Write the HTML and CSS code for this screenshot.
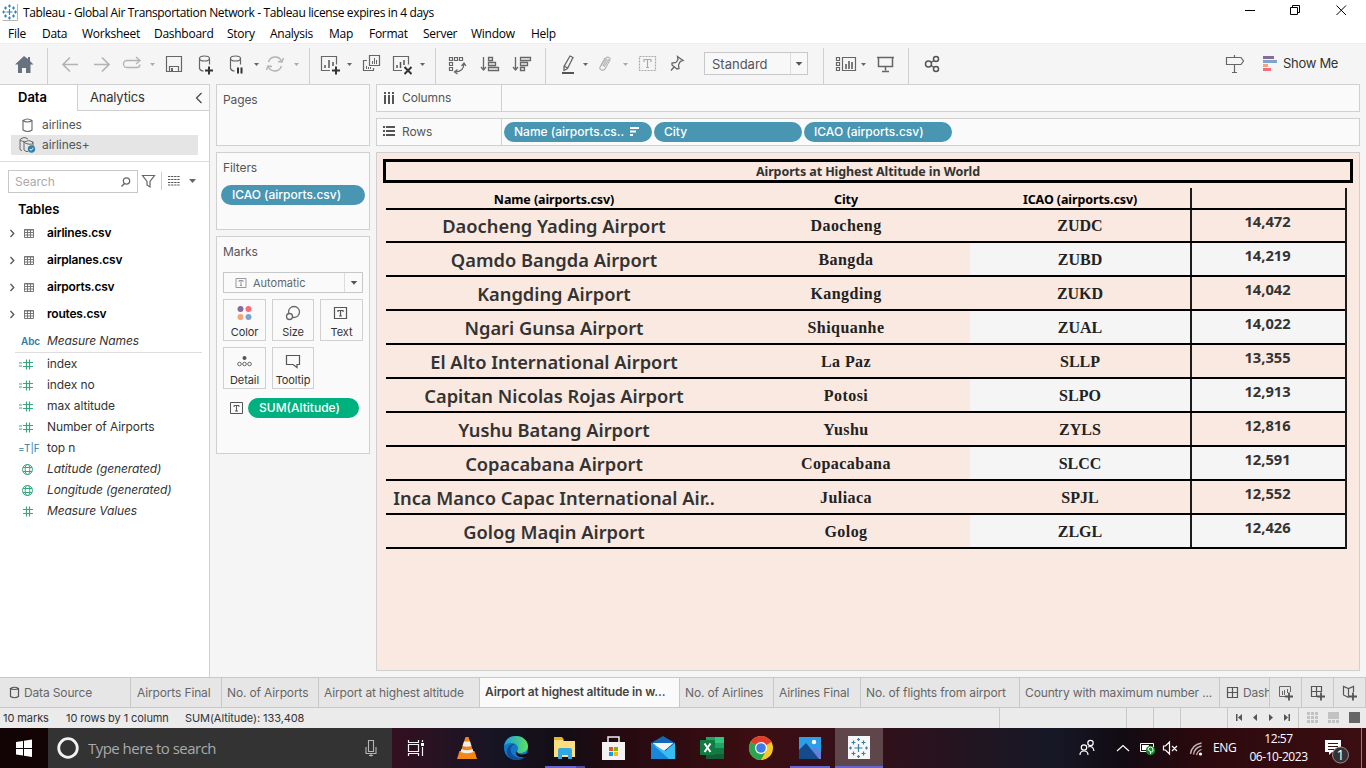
FILE: index.html
```html
<!DOCTYPE html>
<html lang="en">
<head>
<meta charset="utf-8">
<title>Tableau - Global Air Transportation Network</title>
<link rel="stylesheet" href="styles.css">
</head>
<body>
<div class="app">
<header class="titlebar">
  <svg width="16" height="18" viewBox="2 2 16 18"><path d="M2.5 19.500h15V3" fill="none" stroke="#b5b5b5"/><g stroke="#2f80ad" stroke-width="1.200" fill="none"><path d="M9.500 8v6M6.500 11h6M9.500 3.500v3M8 5h3M9.500 15.500v3M8 17h3M3.500 9.500v3M2.500 11h3M15.500 9.500v3M14 11h3M5.500 5.500v3M4 7h3M13.500 5.500v3M12 7h3M5.500 13.500v3M4 15h3M13.500 13.500v3M12 15h3"/></g></svg>
  <span class="title-text">Tableau - Global Air Transportation Network - Tableau license expires in 4 days</span>
  <svg class="win-buttons" width="126" height="23" viewBox="1240 0 126 23"><g fill="none" stroke="#000"><path d="M1245 10.500h10"/><path d="M1290.500 7.500h7v7h-7zM1292.500 7.500v-2h7v7h-2"/><path d="M1336.500 5.500l9.500 9.500M1346 5.500l-9.500 9.500"/></g></svg>
</header>
<nav class="menubar"><span>File</span><span>Data</span><span>Worksheet</span><span>Dashboard</span><span>Story</span><span>Analysis</span><span>Map</span><span>Format</span><span>Server</span><span>Window</span><span>Help</span></nav>

<div class="toolbar">
  <svg width="47" height="40" viewBox="0 44 47 40"><path d="M24 56l-9 8.500h3V73h4v-5h4v5h4.500v-8.500h3L30 61v-4h-2v2z" fill="#66727f"/></svg>
  <i class="sep"></i>
  <svg width="66" height="40" viewBox="48 44 66 40"><path d="M78 64.500H63M70 57.500l-7 7 7 7M94 64.500h15M102 57.500l7 7-7 7" fill="none" stroke="#b3b3b3" stroke-width="1.600"/></svg>
  <svg width="46" height="40" viewBox="114 44 46 40"><path d="M135 60.500h-8a3.500 3.500 0 0 0 0 7h10a3 3 0 0 0 3-3M131 60.500h8M136 57l4 3.500-4 3.500" fill="none" stroke="#b3b3b3" stroke-width="1.300"/><path d="M150 63h5l-2.500 3z" fill="#aaa"/></svg>
  <svg width="28" height="40" viewBox="160 44 28 40"><path d="M166.500 56.500h15v15h-15zM169.500 71.500v-5h9v5" fill="none" stroke="#666" stroke-width="1.200"/><path d="M171 68h2v3h-2z" fill="#666"/></svg>
  <svg width="32" height="40" viewBox="188 44 32 40"><g fill="none" stroke="#666" stroke-width="1.200"><ellipse cx="204.500" cy="58.500" rx="5" ry="2.500"/><path d="M199.500 58.500v10q1 2.500 4 2.500M209.500 58.500v6"/></g><path d="M205 70.500h8M209 66.500v8" stroke="#333" stroke-width="2"/></svg>
  <svg width="42" height="40" viewBox="220 44 42 40"><g fill="none" stroke="#666" stroke-width="1.200"><ellipse cx="235.500" cy="58.500" rx="5" ry="2.500"/><path d="M230.500 58.500v10q1 2.500 4 2.500M240.500 58.500v6"/></g><path d="M238 67.500v6M241.500 67.500v6" stroke="#333" stroke-width="2"/><path d="M254 63h5l-2.500 3z" fill="#666"/></svg>
  <svg width="47" height="40" viewBox="262 44 47 40"><path d="M268.500 62a7 7 0 0 1 13-1M281.500 66a7 7 0 0 1-13 1M278 61.500l4 .500 1.500-4M272 66.500l-4-.500-1.500 4" fill="none" stroke="#b3b3b3" stroke-width="1.400"/><path d="M294 63h5l-2.500 3z" fill="#aaa"/></svg>
  <i class="sep"></i>
  <svg width="48" height="40" viewBox="310 44 48 40"><path d="M330 70.500h-8.500v-14h15v8" fill="none" stroke="#666" stroke-width="1.200"/><path d="M325 65v3M329 60v8M333 62v4" stroke="#555" stroke-width="1.500"/><path d="M332 70.500h8M336 66.500v8" stroke="#333" stroke-width="2"/><path d="M347 63h5l-2.500 3z" fill="#666"/></svg>
  <svg width="28" height="40" viewBox="358 44 28 40"><path d="M369.500 55.500h10v10h-10zM367 60.500h-3.500v10h10V68" fill="none" stroke="#666" stroke-width="1.200"/><path d="M372.500 61v3M374.500 58v6M376.500 60v4M366.500 66v3M368.500 67v2M370.500 67v2" stroke="#666"/></svg>
  <svg width="49" height="40" viewBox="386 44 49 40"><path d="M402 70.500h-8.500v-14h15v8" fill="none" stroke="#666" stroke-width="1.200"/><path d="M397 65v3M400.500 62v6M404 60v5" stroke="#555" stroke-width="1.500"/><path d="M404.500 67l7 7M411.500 67l-7 7" stroke="#333" stroke-width="2"/><path d="M420 63h5l-2.500 3z" fill="#666"/></svg>
  <i class="sep"></i>
  <svg width="36" height="40" viewBox="436 44 36 40"><path d="M449.500 57.500h3v3h-3zM454.500 57.500h3v3h-3zM459.500 57.500h3v3h-3zM449.500 62.500h3v3h-3zM449.500 67.500h3v3h-3zM464 63c0 6-3 9-9 9M461.500 66l2.500-3 2 3M457.500 69.500l-3 2.500 3 2" fill="none" stroke="#666" stroke-width="1.200"/></svg>
  <svg width="33" height="40" viewBox="472 44 33 40"><path d="M483.500 57v13M481 67l2.500 3 2.500-3M488.500 57.500h4v3h-4zM488.500 62.500h7v3h-7zM488.500 67.500h10v3h-10z" fill="none" stroke="#666" stroke-width="1.300"/></svg>
  <svg width="40" height="40" viewBox="505 44 40 40"><path d="M515.500 57v13M513 67l2.500 3 2.500-3M520.500 57.500h10v3h-10zM520.500 62.500h7v3h-7zM520.500 67.500h4v3h-4z" fill="none" stroke="#666" stroke-width="1.300"/></svg>
  <i class="sep"></i>
  <svg width="48" height="40" viewBox="546 44 48 40"><path d="M570 56l3 1.500-5.500 11-3.500 2v-4zM564 66l3.500 2" fill="none" stroke="#666" stroke-width="1.300"/><path d="M562 72h12v2h-12z" fill="#555"/><path d="M583 63h5l-2.500 3z" fill="#666"/></svg>
  <svg width="40" height="40" viewBox="594 44 40 40"><path d="M601 66l5-8c2-2 5 0 4 2l-5 9c-2 2-6 1-5-2l5-9M603 66l4-7M604 67l5-8" fill="none" stroke="#b3b3b3" stroke-width="1.100"/><path d="M623 63h5l-2.500 3z" fill="#aaa"/></svg>
  <svg width="30" height="40" viewBox="634 44 30 40"><path d="M639.500 56.500h16v14h-16z" fill="none" stroke="#aaa" stroke-width="1.200" stroke-dasharray="2 1"/><path d="M644 62v-2.500h7V62M647.500 59.500v8M646 67.500h3" fill="none" stroke="#aaa" stroke-width="1.200"/></svg>
  <svg width="40" height="40" viewBox="664 44 40 40"><path d="M677.500 56.500l5.500 4-2 .500-1 1-1.500 3 .500 3.500-2 .500-5-4v-2l4-.500 2-3zM674.500 66.500l-3.500 4" fill="none" stroke="#666" stroke-width="1.300"/></svg>
  <div class="fit"><span>Standard</span><svg width="17" height="21" viewBox="0 0 17 21"><path d="M5 9h7l-3.500 4z" fill="#555"/></svg></div>
  <i class="sep sep-wide"></i>
  <svg width="36" height="40" viewBox="834 44 36 40"><path d="M836.500 57.500h3v3h-3zM836.500 62.500h3v3h-3zM836.500 67.500h3v3h-3zM842.500 57.500h13v13h-13z" fill="none" stroke="#666" stroke-width="1.200"/><path d="M846 64v5M849 61v8M852 62v7" stroke="#555" stroke-width="1.500"/><path d="M861 63h5l-2.500 3z" fill="#666"/></svg>
  <svg width="38" height="40" viewBox="870 44 38 40"><path d="M877 57.500h17M878.500 58v8.500h14V58M885.500 66.500v4M882 71.500h7" fill="none" stroke="#666" stroke-width="1.500"/></svg>
  <i class="sep"></i>
  <svg width="36" height="40" viewBox="909 44 36 40"><g fill="none" stroke="#555" stroke-width="1.500"><circle cx="928.500" cy="64" r="3"/><circle cx="936" cy="59" r="2.500"/><circle cx="936" cy="69" r="2.500"/><path d="M931 62.500l3-2M931 65.500l3 2"/></g></svg>
  <svg class="to-end" width="62" height="40" viewBox="1221 44 62 40"><path d="M1226.500 57.500h14.500l2.500 3.500-2.500 3.500h-14.500zM1234.500 55v2M1234.500 65v7M1232 72.500h5" fill="none" stroke="#666" stroke-width="1.200"/><path d="M1263 56h11v3h-11z" fill="#866d99"/><path d="M1263 60h14v3h-14z" fill="#7ea3cc"/><path d="M1263 64h5v3h-5z" fill="#f5a57b"/><path d="M1263 68h8v3h-8z" fill="#f96b7b"/></svg>
  <span class="showme">Show Me</span>
</div>

<main class="workspace">
  <aside class="datapane">
    <div class="pane-tabs"><b>Data</b><div><span>Analytics</span><svg width="8" height="12" viewBox="0 0 8 12"><path d="M6.500 1L1.500 6l5 5" fill="none" stroke="#444" stroke-width="1.200"/></svg></div></div>
    <div class="sources">
      <div class="source"><svg width="20" height="16" viewBox="0 0 20 16"><path d="M4 3.500v9.500q5 3 9 0V3.500q-4.500-3-9 0 4.500 3 9 0" fill="none" stroke="#666" stroke-width="1.100"/></svg><span>airlines</span></div>
      <div class="source chosen"><svg width="20" height="18" viewBox="0 0 20 18"><path d="M3 14.500q-2 0-2-1.500V3.500Q5 0 9 3M1 4q2 1.500 4 1.500M5 6v8q2 2 4 1.500M5 6q5-3 9 0 0 3-5 2-3-.500-4-2M14 6v4" fill="none" stroke="#666"/><circle cx="12.500" cy="13" r="3.700" fill="#3182a8"/><path d="M10.800 13l1.300 1.300 2.400-2.600" fill="none" stroke="#fff"/></svg><span>airlines+</span></div>
    </div>
    <div class="searchrow">
      <div class="search"><span>Search</span><svg width="12" height="12" viewBox="0 0 12 12"><circle cx="6.500" cy="5" r="3.200" fill="none" stroke="#666" stroke-width="1.200"/><path d="M4.500 7.500L1.500 10.500" stroke="#666" stroke-width="1.400"/></svg></div>
      <svg width="60" height="22" viewBox="140 170 60 22"><path d="M142.500 175.500h12l-4.500 6v5.500l-3-2v-3.500z" fill="none" stroke="#666" stroke-width="1.200"/><path d="M161.500 172v18" stroke="#ccc"/><path d="M168 176.500h12M168 179.500h12M168 182.500h12M168 185h12" stroke="#555" stroke-width="1.200" stroke-dasharray="2.300 .800"/><path d="M189 179h7l-3.500 4z" fill="#666"/></svg>
    </div>
    <h3>Tables</h3>
    <div class="tables">
      <div><svg width="28" height="12" viewBox="0 0 28 12"><path d="M1.500 3l3.300 3.500L1.500 10" fill="none" stroke="#555" stroke-width="1.300"/><path d="M15.500 2.500h9v8h-9zM15 3h10M15.500 5.500h9M15.500 8h9M18.500 3v7M21.500 3v7" fill="none" stroke="#777"/></svg><b>airlines.csv</b></div>
      <div><svg width="28" height="12" viewBox="0 0 28 12"><path d="M1.500 3l3.300 3.500L1.500 10" fill="none" stroke="#555" stroke-width="1.300"/><path d="M15.500 2.500h9v8h-9zM15 3h10M15.500 5.500h9M15.500 8h9M18.500 3v7M21.500 3v7" fill="none" stroke="#777"/></svg><b>airplanes.csv</b></div>
      <div><svg width="28" height="12" viewBox="0 0 28 12"><path d="M1.500 3l3.300 3.500L1.500 10" fill="none" stroke="#555" stroke-width="1.300"/><path d="M15.500 2.500h9v8h-9zM15 3h10M15.500 5.500h9M15.500 8h9M18.500 3v7M21.500 3v7" fill="none" stroke="#777"/></svg><b>airports.csv</b></div>
      <div><svg width="28" height="12" viewBox="0 0 28 12"><path d="M1.500 3l3.300 3.500L1.500 10" fill="none" stroke="#555" stroke-width="1.300"/><path d="M15.500 2.500h9v8h-9zM15 3h10M15.500 5.500h9M15.500 8h9M18.500 3v7M21.500 3v7" fill="none" stroke="#777"/></svg><b>routes.csv</b></div>
    </div>
    <div class="fields">
      <div class="names"><span class="kind abc">Abc</span><em>Measure Names</em></div>
      <div><svg width="24" height="14" viewBox="0 0 24 14"><path d="M4 6h3M4 9h3M8 5.500h10M8 9.500h10M11.500 2.500v10M14.500 2.500v10" stroke="#3aa67e" stroke-width="1.200"/></svg><span>index</span></div>
      <div><svg width="24" height="14" viewBox="0 0 24 14"><path d="M4 6h3M4 9h3M8 5.500h10M8 9.500h10M11.500 2.500v10M14.500 2.500v10" stroke="#3aa67e" stroke-width="1.200"/></svg><span>index no</span></div>
      <div><svg width="24" height="14" viewBox="0 0 24 14"><path d="M4 6h3M4 9h3M8 5.500h10M8 9.500h10M11.500 2.500v10M14.500 2.500v10" stroke="#3aa67e" stroke-width="1.200"/></svg><span>max altitude</span></div>
      <div><svg width="24" height="14" viewBox="0 0 24 14"><path d="M4 6h3M4 9h3M8 5.500h10M8 9.500h10M11.500 2.500v10M14.500 2.500v10" stroke="#3aa67e" stroke-width="1.200"/></svg><span>Number of Airports</span></div>
      <div><span class="kind tf">=T|F</span><span>top n</span></div>
      <div><svg width="24" height="14" viewBox="0 0 24 14"><g fill="none" stroke="#3aa67e"><circle cx="12.500" cy="7.500" r="5"/><ellipse cx="12.500" cy="7.500" rx="2.300" ry="5"/><path d="M8 5.500h9M8 9.500h9"/></g></svg><em>Latitude (generated)</em></div>
      <div><svg width="24" height="14" viewBox="0 0 24 14"><g fill="none" stroke="#3aa67e"><circle cx="12.500" cy="7.500" r="5"/><ellipse cx="12.500" cy="7.500" rx="2.300" ry="5"/><path d="M8 5.500h9M8 9.500h9"/></g></svg><em>Longitude (generated)</em></div>
      <div><svg width="24" height="14" viewBox="0 0 24 14"><path d="M8 5.500h10M8 9.500h10M11.500 2.500v10M14.500 2.500v10" stroke="#3aa67e" stroke-width="1.200"/></svg><em>Measure Values</em></div>
    </div>
  </aside>

  <section class="cards">
    <div class="card pages"><h4>Pages</h4></div>
    <div class="card filters"><h4>Filters</h4><div class="pill">ICAO (airports.csv)</div></div>
    <div class="card marks"><h4>Marks</h4>
      <div class="marktype"><svg width="12" height="12" viewBox="0 0 12 12"><path d="M1 1.500h10v9H1zM4 5V3.500h4V5M6 4v4M5 8.500h2" fill="none" stroke="#999"/></svg><span>Automatic</span><svg width="18" height="19" viewBox="0 0 18 19"><path d="M6 8h7l-3.500 4z" fill="#555"/></svg></div>
      <div class="markgrid">
        <div><svg width="20" height="18" viewBox="0 0 20 18"><circle cx="5.500" cy="5" r="3" fill="#866d99"/><circle cx="13.500" cy="5" r="3" fill="#f96b7b"/><circle cx="5.500" cy="13" r="3" fill="#f5a57b"/><circle cx="13.500" cy="13" r="3" fill="#7ea3cc"/></svg><span>Color</span></div>
        <div><svg width="20" height="18" viewBox="0 0 20 18"><g stroke="#666" stroke-width="1.300" fill="#fcfcfc"><circle cx="11" cy="8" r="5.500"/><circle cx="6.500" cy="12.500" r="3"/></g></svg><span>Size</span></div>
        <div><svg width="20" height="18" viewBox="0 0 20 18"><path d="M2.500 3.500h12v11h-12zM6 8V6.500h5V8M8.500 7v5M7 12h3" fill="none" stroke="#555" stroke-width="1.200"/></svg><span>Text</span></div>
        <div><svg width="20" height="18" viewBox="0 0 20 18"><circle cx="9.500" cy="6" r="2" fill="#555"/><g fill="none" stroke="#666"><circle cx="4.500" cy="12" r="1.800"/><circle cx="9.500" cy="12" r="1.800"/><circle cx="14.500" cy="12" r="1.800"/></g></svg><span>Detail</span></div>
        <div><svg width="20" height="18" viewBox="0 0 20 18"><path d="M3.500 3.500h13v9h-2.500v3l-4-3H3.500z" fill="none" stroke="#555" stroke-width="1.200"/></svg><span>Tooltip</span></div>
      </div>
      <div class="markpill"><svg width="14" height="14" viewBox="0 0 14 14"><path d="M1.500 1.500h12v11h-12zM5 6V4.500h5V6M7.500 5v5M6 10h3" fill="none" stroke="#555"/></svg><div class="pill green">SUM(Altitude)</div></div>
    </div>
  </section>

  <section class="sheet">
    <div class="shelf"><div class="shelf-label"><svg width="12" height="12" viewBox="0 0 12 12"><path d="M1 0h2v2H1zM5 0h2v2H5zM9 0h2v2H9zM1 3h2v9H1zM5 3h2v9H5zM9 3h2v9H9z" fill="#555"/></svg><span>Columns</span></div></div>
    <div class="shelf"><div class="shelf-label"><svg width="12" height="12" viewBox="0 0 12 12"><path d="M0 0h2v2H0zM3 0h9v2H3zM0 4h2v2H0zM3 4h9v2H3zM0 8h2v2H0zM3 8h9v2H3z" fill="#555"/></svg><span>Rows</span></div>
      <div class="pill"><span>Name (airports.cs..</span><svg width="11" height="10" viewBox="0 0 11 10"><path d="M1 1h9M1 4.500h6M1 8h3" stroke="#fff" stroke-width="1.800"/></svg></div><div class="pill">City</div><div class="pill">ICAO (airports.csv)</div></div>
    <div class="view">
      <h2>Airports at Highest Altitude in World</h2>
      <div class="grid">
        <div class="row head"><span>Name (airports.csv)</span><span>City</span><span>ICAO (airports.csv)</span><span></span></div>
        <div class="row"><span>Daocheng Yading Airport</span><span>Daocheng</span><span>ZUDC</span><span>14,472</span></div>
        <div class="row"><span>Qamdo Bangda Airport</span><span>Bangda</span><span>ZUBD</span><span>14,219</span></div>
        <div class="row"><span>Kangding Airport</span><span>Kangding</span><span>ZUKD</span><span>14,042</span></div>
        <div class="row"><span>Ngari Gunsa Airport</span><span>Shiquanhe</span><span>ZUAL</span><span>14,022</span></div>
        <div class="row"><span>El Alto International Airport</span><span>La Paz</span><span>SLLP</span><span>13,355</span></div>
        <div class="row"><span>Capitan Nicolas Rojas Airport</span><span>Potosi</span><span>SLPO</span><span>12,913</span></div>
        <div class="row"><span>Yushu Batang Airport</span><span>Yushu</span><span>ZYLS</span><span>12,816</span></div>
        <div class="row"><span>Copacabana Airport</span><span>Copacabana</span><span>SLCC</span><span>12,591</span></div>
        <div class="row"><span>Inca Manco Capac International Air..</span><span>Juliaca</span><span>SPJL</span><span>12,552</span></div>
        <div class="row"><span>Golog Maqin Airport</span><span>Golog</span><span>ZLGL</span><span>12,426</span></div>
      </div>
    </div>
  </section>
</main>

<div class="sheettabs">
  <div><svg width="15" height="14" viewBox="0 0 15 14"><path d="M1.500 2.500v8q4 2.500 8 0v-8q-4-2.500-8 0 4 2 8 0" fill="none" stroke="#555" stroke-width="1.200"/></svg>Data Source</div><div>Airports Final</div><div>No. of Airports</div><div>Airport at highest altitude</div><div class="active">Airport at highest altitude in w...</div><div>No. of Airlines</div><div>Airlines Final</div><div>No. of flights from airport</div><div>Country with maximum number ...</div><div><svg width="17" height="12" viewBox="0 0 17 12"><path d="M1.500.500h10v10h-10zM6.500.500v10M1.500 5.500h10" fill="none" stroke="#555" stroke-width="1.200"/></svg>Dash</div>
  <div><svg width="18" height="18" viewBox="0 0 18 18"><path d="M9 12.500H3.500v-10h11V8M6.500 7v4M8.500 6v5M11.500 5v4" fill="none" stroke="#666"/><path d="M9 12.500h8M13 8.500v8" stroke="#555" stroke-width="1.800"/></svg></div>
  <div><svg width="18" height="18" viewBox="0 0 18 18"><path d="M9 12.500H3.500v-10h10V8M8.500 2.500v10M3.500 7.500h10" fill="none" stroke="#555" stroke-width="1.200"/><path d="M9 12.500h8M13 8.500v8" stroke="#555" stroke-width="1.800"/></svg></div>
  <div><svg width="18" height="18" viewBox="0 0 18 18"><path d="M8.500 13.500L3.500 11V2.500l5 2 5-2V8M8.500 4.500v9" fill="none" stroke="#555" stroke-width="1.200"/><path d="M9 12.500h8M13 8.500v8" stroke="#555" stroke-width="1.800"/></svg></div>
</div>

<div class="status">
  <span>10 marks</span><span>10 rows by 1 column</span><span>SUM(Altitude): 133,408</span>
  <svg width="367" height="20" viewBox="999 708 367 20"><path d="M999.500 708v20M1126.500 708v20M1153.500 708v20M1180.500 708v20M1227.500 708v20M1298.500 708v20" stroke="#c8c8c8"/><path d="M1236 714h1.500v7h-1.500zM1242 714v7l-4-3.500zM1257 714v7l-4-3.500zM1269 714v7l4-3.500zM1284 714v7l4-3.500zM1288.500 714h1.500v7h-1.500z" fill="#555"/><path d="M1307 712h3v3h-3zM1311 712h3v3h-3zM1315 712h3v3h-3zM1307 716h3v3h-3zM1311 716h3v3h-3zM1315 716h3v3h-3zM1307 720h3v3h-3zM1311 720h3v3h-3zM1315 720h3v3h-3zM1328 712h11v7h-11zM1328 720h3v3h-3zM1332 720h3v3h-3zM1336 720h3v3h-3z" fill="#c2c2c2"/><path d="M1349 712h11v11h-11z" fill="#666"/></svg>
</div>

<footer class="taskbar">
  <svg width="48" height="40" viewBox="0 728 48 40"><path d="M16 742l7-1v7h-7zM24 740.800l8-1.200v8.400h-8zM16 749h7v6.500l-7-1zM24 749h8v8l-8-1.200z" fill="#fff"/></svg>
  <div class="winsearch"><svg width="24" height="24" viewBox="0 0 24 24"><circle cx="12" cy="12" r="9.300" fill="none" stroke="#f2f2f2" stroke-width="2.800"/></svg><span>Type here to search</span><svg width="12" height="18" viewBox="0 0 12 18"><path d="M3.500 1.500h5v11h-5zM1 8v6.500h10V8M6 14.500v3M4 16.500h4" fill="none" stroke="#b5b5b5" stroke-width="1.100"/></svg></div>
  <svg width="50" height="40" viewBox="392 728 50 40"><path d="M408.500 740v2.500h10V740M408.500 756v-2.500h10v2.500M408.500 744.500h10v7h-10zM422.500 740v2M422.500 747v9" fill="none" stroke="#f2f2f2" stroke-width="1.200"/><path d="M421 743h3v3h-3z" fill="#fff"/></svg>
  <svg width="49" height="40" viewBox="442 728 49 40"><path d="M459.500 751h15l2.500 8h-20z" fill="#f48613"/><path d="M465.500 737h3l5.500 17q-7 3-14 0z" fill="#f48613"/><path d="M464 741.500h6l1.500 4.500q-4.500 1.500-9 0zM461.500 749q5.500 2.500 11 0l1 3q-6.500 2.500-13 0z" fill="#eee"/></svg>
  <svg width="49" height="40" viewBox="491 728 49 40"><defs><linearGradient id="eg"><stop stop-color="#1b9de2"/><stop offset="1" stop-color="#5be25e"/></linearGradient></defs><circle cx="516" cy="748" r="12" fill="#1277cb"/><path d="M504 746c1-7 6-10 12-10 7 0 12 5 12 10 0 5-4 7-8 7-3 0-4-1-3-2 2-2 1-6-2-7-4-2-8-1-11 2z" fill="url(#eg)"/><path d="M515 744c-6 2-6 10 1 13 4 2 8 1 10-1-2 3-6 4-10 4-6 0-10-5-9-10 1-4 5-7 8-6z" fill="#0e4e96"/><path d="M517 751q0 3 4 3.500 4 .500 8-2.500l-1 4-3 1q-6 1-8.500-2-1-3 .500-4z" fill="#160b15"/></svg>
  <svg width="49" height="40" viewBox="540 728 49 40"><path d="M554 739h8l2 2h11v16h-21z" fill="#fddd80"/><path d="M554 737h8l2 3h-10z" fill="#e7b42c"/><path d="M558 750q0-2 2-2h10q2 0 2 2v9h-4v-4h-6v4h-4z" fill="#31a9e0"/><path d="M545 766h31v2h-31z" fill="#6865d0"/><path d="M576 766h9v2h-9z" fill="#514a98"/></svg>
  <svg width="49" height="40" viewBox="589 728 49 40"><path d="M602 742h23v18h-23z" fill="#f3f3f3"/><path d="M608 742v-5h11v5" fill="none" stroke="#eee" stroke-width="1.500"/><path d="M609 747h4v4h-4z" fill="#f25022"/><path d="M614 747h4v4h-4z" fill="#7fba00"/><path d="M609 752h4v4h-4z" fill="#00a4ef"/><path d="M614 752h4v4h-4z" fill="#ffb900"/></svg>
  <svg width="49" height="40" viewBox="638 728 49 40"><path d="M651 743l12-7 12 7v6h-24z" fill="#1268b4"/><path d="M653 743h20l-10 9z" fill="#f4f4f4"/><path d="M651 743l14 8 10-8v16h-24z" fill="#36bdf0"/><path d="M653 743h20l-9 7.500z" fill="#f4f4f4"/><path d="M651 743l18 16h-18z" fill="#1687db"/></svg>
  <svg width="49" height="40" viewBox="687 728 49 40"><path d="M706 737h18v22h-18z" fill="#21a366"/><path d="M715 737h9v6h-9z" fill="#33c481"/><path d="M706 748h18v11h-18z" fill="#185c37"/><path d="M715 748h9v6h-9z" fill="#107c41"/><rect x="700" y="740" width="15" height="15" rx="1" fill="#107c41"/><path d="M704.500 743.500l6 8.500M710.500 743.500l-6 8.500" stroke="#fff" stroke-width="2"/></svg>
  <svg width="49" height="40" viewBox="736 728 49 40"><circle cx="761" cy="748" r="12" fill="#f7c928"/><path d="M761 748L750.600 742A12 12 0 0 1 771.400 742z" fill="#e33b2e"/><path d="M750.600 742A12 12 0 0 0 761 760l5-9-5-3z" fill="#2da44f"/><circle cx="761" cy="748" r="6" fill="#fff"/><circle cx="761" cy="748" r="4.800" fill="#3b7de9"/></svg>
  <svg width="50" height="40" viewBox="785 728 50 40"><path d="M799 737h22v22h-22z" fill="#2b9eea"/><path d="M806 759l9-12 6 6v6z" fill="#6c7cdb"/><path d="M799 750l7-7 13 16h-20z" fill="#144b8c"/><circle cx="814" cy="742" r="2.200" fill="#fff"/><path d="M790 766h40v2h-40z" fill="#6865d0"/></svg>
  <svg class="current" width="48" height="40" viewBox="835 728 48 40"><path d="M848 736h22v23h-22z" fill="#f7f7f7"/><path d="M858.500 744v8M854.500 748h8M858.500 738v3M857 739.500h3M858.500 755v3M857 756.500h3M850.500 746.500v3M849 748h3M866.500 746.500v3M865 748h3M853.500 740.500v4M851.500 742.500h4M863.500 740.500v4M861.500 742.500h4M853.500 751.500v4M851.500 753.500h4M863.500 751.500v4M861.500 753.500h4" stroke="#3d7fa6" stroke-width="1.200"/><path d="M835 766h48v2h-48z" fill="#6865d0"/></svg>
  <svg class="to-end" width="138" height="40" viewBox="1072 728 138 40"><g fill="none" stroke="#fff" stroke-width="1.200"><circle cx="1084" cy="747.500" r="2.700"/><path d="M1080 755q0-4 4-4t4 4"/><circle cx="1090.500" cy="743" r="2.700"/><path d="M1088 747q5-2 6 4"/><path d="M1117 751l6-5.500 6 5.500"/></g><path d="M1140.500 743.500h13v8h-13z" fill="none" stroke="#fff"/><path d="M1142 745h7v5h-7z" fill="#fff"/><circle cx="1150.500" cy="750.500" r="4.700" fill="#148a29"/><path d="M1150.500 754v-3M1148 750q0-3 2.500-3t2.500 3-2.500 1.500-2.500-1.500z" fill="none" stroke="#fff"/><path d="M1163.500 746h2l4-4v12l-4-4h-2zM1172 746l5 5M1177 746l-5 5" fill="none" stroke="#fff" stroke-width="1.200"/><path d="M1190.500 754q1-9 11-11M1193.500 754.500q1-7 8-8.500M1196.500 755q1-4 5-5.500" fill="none" stroke="#c9b9bb" stroke-width="1.300"/><circle cx="1200.500" cy="754" r="1.600" fill="#fff"/></svg>
  <span class="lang">ENG</span>
  <div class="clock"><span>12:57</span><span>06-10-2023</span></div>
  <svg class="notice" width="51" height="40" viewBox="1315 728 51 40"><path d="M1325 740h16v12h-9l-3 3v-3h-4z" fill="#fff"/><path d="M1328 743.500h10M1328 746.500h10M1328 749.500h6" stroke="#391012"/><circle cx="1340.500" cy="755" r="8" fill="#343232" stroke="#9b8c8c"/><text x="1340.500" y="760" text-anchor="middle" class="badge">1</text><path d="M1361.500 728v40" stroke="#95797c"/></svg>
</footer>
</div>
</body>
</html>
```
FILE: styles.css
```css
* { box-sizing: border-box; }
body { margin: 0; font-family: Inter, "Open Sans", sans-serif; color: #333; }
.app { width: 1366px; height: 768px; display: flex; flex-direction: column; overflow: hidden; background: #f5f5f5; font-size: 12px; white-space: nowrap; }
svg { display: block; flex: none; }
h2, h3, h4 { margin: 0; font-weight: 400; }

.titlebar { height: 23px; flex: none; background: #fff; display: flex; align-items: center; padding-left: 2px; font-family: "Open Sans", sans-serif; color: #000; }
.title-text { margin-left: 5px; font-size: 12px; letter-spacing: -.355px; padding-top: 1px; }
.win-buttons, .to-end { margin-left: auto; }
.menubar { height: 20px; flex: none; background: #fff; display: grid; grid-template-columns: 34px 40px 72px 73px 43px 59px 40px 54px 48px 60px 50px; padding-left: 8px; font-family: "Open Sans", sans-serif; color: #000; letter-spacing: -.27px; line-height: 22px; }

.toolbar { height: 41px; flex: none; display: flex; align-items: flex-end; border-top: 1px solid #eee; }
.sep { width: 1px; height: 36px; background: #d0d0d0; flex: none; align-self: flex-end; }
.fit { width: 104px; height: 23px; border: 1px solid #c8c8c8; background: #f8f8f8; margin-bottom: 9px; display: flex; justify-content: space-between; padding-left: 7px; align-items: center; color: #555; font-size: 13px; }
.fit svg { border-left: 1px solid #ddd; }
.sep-wide { margin: 0 10px 0 15px; }
.showme { width: 83px; line-height: 38px; height: 40px; font-size: 13px; letter-spacing: -.3px; color: #333; }

.workspace { height: 593px; flex: none; display: flex; gap: 6px; }
.datapane { width: 210px; background: #fff; border: 1px solid #d0d0d0; border-width: 1px 1px 0 0; }
.pane-tabs { display: flex; height: 26px; font-size: 13px; line-height: 25px; }
.pane-tabs b { width: 77px; padding-left: 18px; color: #000; font-weight: 600; }
.pane-tabs div { flex: 1; border: 1px solid #d0d0d0; border-width: 0 0 1px 1px; background: #fafafa; display: flex; justify-content: space-between; align-items: center; padding: 0 6px 0 12px; letter-spacing: -.2px; }
.sources { height: 51px; padding: 4px 11px 0; border-bottom: 1px solid #ddd; color: #555; }
.source { height: 20px; display: flex; align-items: center; padding-left: 8px; letter-spacing: -.1px; }
.source span { margin-left: 3px; padding-bottom: 1px; }
.chosen { background: #e5e5e5; }
.searchrow { display: flex; padding: 8px 0 0 8px; gap: 2px; height: 31px; }
.search { width: 130px; height: 23px; border: 1px solid #c8c8c8; display: flex; align-items: center; justify-content: space-between; padding: 0 5px 0 6px; color: #aaa; }
.datapane h3 { font-size: 13px; font-weight: 600; color: #000; padding-left: 18px; line-height: 20px; margin-top: 6px; }
.tables { padding: 0 0 0 9px; }
.tables div { height: 27px; display: flex; align-items: center; gap: 10px; color: #000; }
.tables b { font-weight: 600; letter-spacing: -.2px; }
.fields div { height: 21px; display: flex; align-items: center; padding-left: 15px; letter-spacing: -.1px; }
.fields div > :last-child { margin-left: 8px; }
.fields .names { height: 26px; padding: 2px 0 0; margin: 0 7px 0 15px; border-bottom: 1px solid #ddd; }
.kind { width: 24px; color: #2f7d9e; font-size: 10px; }
.abc { padding-left: 6px; font-weight: 600; }
.tf { padding-left: 3px; }

.cards { width: 154px; display: flex; flex-direction: column; gap: 6px; }
.card { border: 1px solid #d0d0d0; background: #fafafa; padding: 0 6px; color: #555; }
.card h4 { font-size: 12px; line-height: 30px; color: #555; letter-spacing: -.1px; }
.pages { height: 62px; }
.filters { height: 78px; }
.marks { height: 218px; }
.pill { height: 20px; border-radius: 10px; background: #4996b2; color: #fff; line-height: 20px; padding-left: 11px; font-weight: 500; }
.filters .pill { margin: 2px -2px 0; letter-spacing: -.03px; }
.marktype { height: 21px; margin-top: 5px; border: 1px solid #c8c8c8; display: flex; align-items: center; padding-left: 11px; gap: 6px; color: #666; }
.marktype span { flex: 1; font-size: 11px; }
.marktype svg:last-child { border-left: 1px solid #ddd; }
.markgrid { display: grid; grid-template-columns: 43px 42px 43px; column-gap: 6px; row-gap: 6px; margin-top: 6px; }
.markgrid div { height: 42px; border: 1px solid #d0d0d0; display: flex; flex-direction: column; align-items: center; padding-top: 4px; font-size: 11px; letter-spacing: -.1px; color: #333; line-height: 21px; }
.markpill { display: flex; align-items: center; margin-top: 9px; padding-left: 6px; gap: 5px; }
.green { background: #00b180; width: 111px; }

.sheet { width: 984px; display: flex; flex-direction: column; gap: 6px; }
.shelf { height: 28px; flex: none; border: 1px solid #d0d0d0; background: #fafafa; display: flex; align-items: center; gap: 2px; }
.shelf-label { width: 125px; height: 26px; border-right: 1px solid #d0d0d0; display: flex; align-items: center; padding: 0 0 1px 6px; gap: 7px; color: #555; letter-spacing: -.1px; }
.shelf .pill { width: 148px; display: flex; align-items: center; justify-content: space-between; padding: 0 12px 0 10px; }
.view { height: 519px; border: 1px solid #d0d0d0; background: #fae9e0; padding: 6px; }
.view h2 { height: 24px; width: 970px; border: 3px solid #000; font: 700 12.500px/19px "Noto Sans", sans-serif; text-align: center; letter-spacing: -.1px; }
.grid { width: 961px; margin: 5px 0 0 3px; border-right: 2px solid #1c1c1c; }
.row { height: 34px; display: grid; grid-template-columns: 338px 246px 220px 155px; border-bottom: 2px solid #000; text-align: center; }
.row span { line-height: 33px; font-family: "Liberation Serif", serif; font-weight: 700; font-size: 16px; color: #222; overflow: hidden; }
.row span:nth-child(2) { letter-spacing: .45px; padding-right: 2px; }
.row span:first-child { font-family: "Noto Sans", sans-serif; font-weight: 600; font-size: 18.300px; line-height: 34px; color: #333; padding-right: 2px; }
.row span:last-child { font-family: "Noto Sans", sans-serif; font-size: 14.700px; line-height: 25px; color: #333; border-left: 2px solid #1c1c1c; padding-right: 2px; }
.row:nth-child(2) { height: 33px; }
.row:nth-child(2) span { line-height: 31px; }
.row:nth-child(2) span:first-child { line-height: 32px; }
.row:nth-child(2) span:last-child { line-height: 23px; }
.row:nth-child(odd):not(.head) span:nth-child(n+3) { background: #f5f5f5; }
.row.head { height: 22px; }
.row.head span, .row.head span:first-child { font: 700 12.500px/24px "Noto Sans", sans-serif; color: #000; letter-spacing: -.1px; }

.sheettabs { height: 31px; flex: none; display: grid; grid-template-columns: 131px 91px 97px 161px 200px 94px 87px 159px 200px 50px 32px 32px 32px; border-top: 1px solid #c8c8c8; border-bottom: 1px solid #c8c8c8; background: #e6e6e6; color: #666; letter-spacing: -.14px; }
.sheettabs div { border-right: 1px solid #c8c8c8; display: flex; align-items: center; padding-left: 6px; overflow: hidden; }
.sheettabs div:nth-child(n+3):nth-child(-n+9) { padding-left: 5px; }
.sheettabs div:first-child { padding-left: 9px; }
.sheettabs .active { background: #fafafa; font-weight: 600; color: #444; padding-bottom: 3px; }
.status { height: 20px; flex: none; display: grid; grid-template-columns: 63px 119px 814px 367px; padding-left: 3px; background: #ebebeb; align-items: center; font-size: 11px; letter-spacing: -.08px; }

.taskbar { height: 40px; flex: none; display: flex; color: #fff; font-family: "Open Sans", sans-serif; background: linear-gradient(90deg, #120305 0%, #120305 20%, #321020 29%, #171525 36%, #130d14 41%, #260a10 46%, #3b0e12 55%, #32101a 64%, #241420 70%, #171827 77%, #110b13 82%, #2b090d 88%, #3b0e12 100%); }
.winsearch { width: 344px; background: #333; display: flex; align-items: center; padding: 0 15px 0 8px; gap: 8px; color: #aaa; font-size: 15px; letter-spacing: -.53px; }
.winsearch span { flex: 1; }
.current { background: #5f464b; }
.lang { width: 35px; padding-left: 3px; line-height: 40px; letter-spacing: -.3px; }
.clock { width: 67px; margin-right: 3px; display: flex; flex-direction: column; text-align: center; line-height: 18px; padding-top: 2px; letter-spacing: -.45px; }
.badge { font: 14px "Open Sans", sans-serif; fill: #fff; }
```
